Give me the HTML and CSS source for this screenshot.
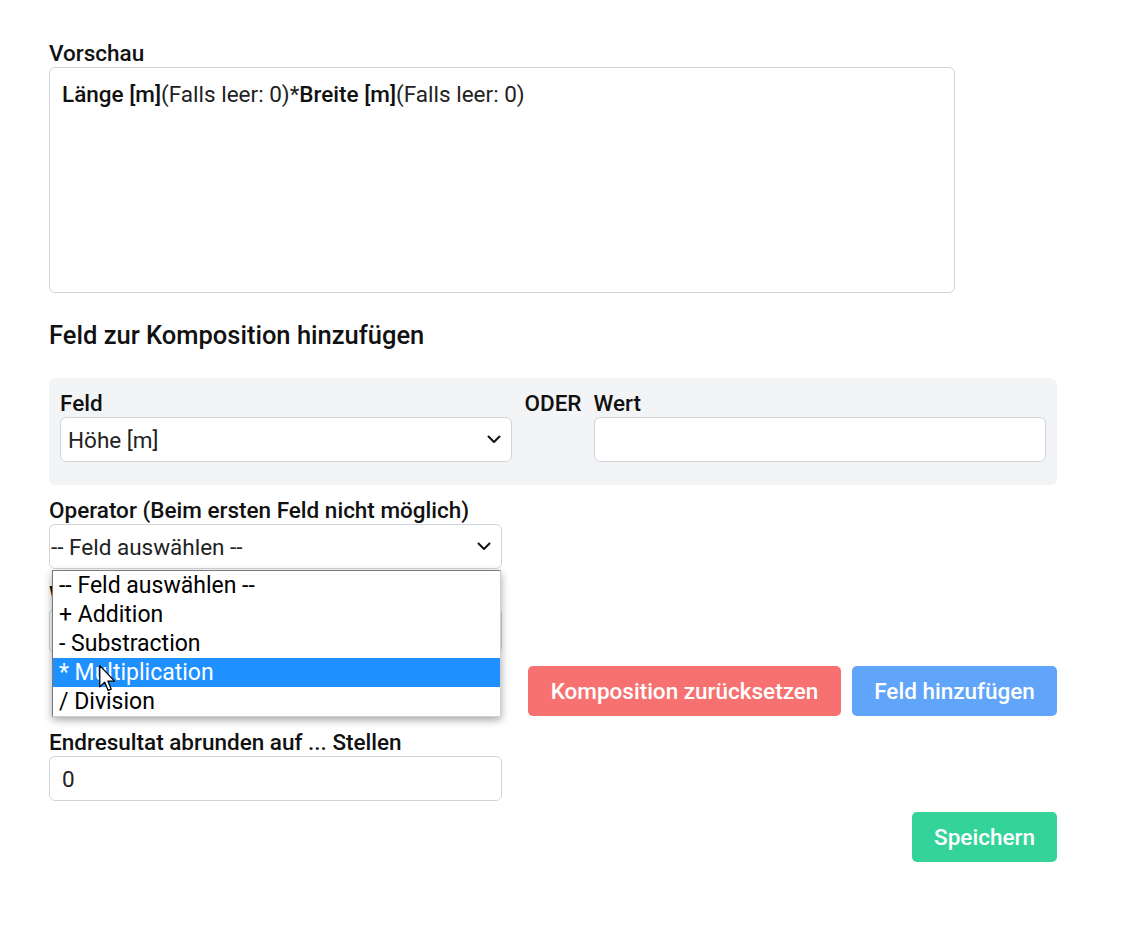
FILE: index.html
```html
<!DOCTYPE html>
<html lang="de">
<head>
<meta charset="utf-8">
<title>Komposition</title>
<link rel="stylesheet" href="styles.css">
</head>
<body>
<div class="page">
  <div class="label">Vorschau</div>
  <div class="preview"><b>Länge [m]</b>(Falls leer: 0)*<b>Breite [m]</b>(Falls leer: 0)</div>

  <h2 class="heading">Feld zur Komposition hinzufügen</h2>

  <div class="greybox">
    <div class="col">
      <div class="label">Feld</div>
      <div class="select sel-feld"><span>Höhe [m]</span>
        <svg class="chev" width="14" height="9" viewBox="0 0 14 9"><path d="M1.5 1.5 L7 7 L12.5 1.5" fill="none" stroke="#111" stroke-width="2" stroke-linecap="round" stroke-linejoin="round"/></svg>
      </div>
    </div>
    <div class="oder label">ODER</div>
    <div class="col">
      <div class="label">Wert</div>
      <div class="input"></div>
    </div>
  </div>

  <div class="field op-field">
    <div class="label">Operator (Beim ersten Feld nicht möglich)</div>
    <div class="select sel-op"><span>-- Feld auswählen --</span>
      <svg class="chev" width="14" height="9" viewBox="0 0 14 9"><path d="M1.5 1.5 L7 7 L12.5 1.5" fill="none" stroke="#111" stroke-width="2" stroke-linecap="round" stroke-linejoin="round"/></svg>
    </div>
    <div class="dropdown">
      <div class="opt">-- Feld auswählen --</div>
      <div class="opt">+ Addition</div>
      <div class="opt">- Substraction</div>
      <div class="opt active">* Multiplication</div>
      <div class="opt">/ Division</div>
      <svg class="cursor" width="17" height="27" viewBox="0 0 13 21"><path d="M0.5 0.5 L0.5 17 L4.3 13.3 L7 19.8 L9.4 18.8 L6.8 12.5 L12 12.5 Z" fill="#fff" stroke="#000" stroke-width="1" stroke-linejoin="round"/></svg>
    </div>
  </div>

  <div class="field half">
    <div class="label">Wert (Falls Feld leer)</div>
    <div class="input"></div>
  </div>

  <div class="btnrow">
    <button class="btn red">Komposition zurücksetzen</button>
    <button class="btn blue">Feld hinzufügen</button>
  </div>

  <div class="field half round">
    <div class="label">Endresultat abrunden auf ... Stellen</div>
    <div class="input val">0</div>
  </div>

  <div class="saverow">
    <button class="btn green">Speichern</button>
  </div>
</div>
</body>
</html>
```

FILE: styles.css
```css
* { box-sizing: border-box; }
html, body { margin: 0; padding: 0; background: #fff; }
body {
  font-family: Roboto, "Liberation Sans", Arial, sans-serif;
  font-size: 22.5px;
  color: #111;
}
.page {
  width: 1057px;
  padding: 40px 0 60px 49px;
}
.label {
  font-weight: 500;
  line-height: 27px;
  height: 27px;
  color: #111;
  white-space: nowrap;
}
.preview {
  width: 906px;
  height: 226px;
  border: 1px solid #d1d5db;
  border-radius: 6px;
  padding: 12px 12px;
  line-height: 28px;
  color: #222;
}
.preview b { font-weight: 500; color: #111; }
.heading {
  margin: 25px 0 26px;
  font-size: 25.5px;
  font-weight: 500;
  line-height: 34px;
}
.greybox {
  display: flex;
  gap: 12px;
  background: #f3f4f6;
  border-radius: 6px;
  padding: 12px 11px 23px;
}
.col { flex: 1; display: flex; flex-direction: column; }
.oder { flex: none; }
.select, .input {
  height: 45px;
  background: #fff;
  border: 1px solid #d1d5db;
  border-radius: 6px;
  display: flex;
  align-items: center;
  color: #222;
}
.select { justify-content: space-between; padding: 0 10px 0 7px; }
.sel-op { padding-left: 1px; }
.chev { flex: none; }
.field { position: relative; margin-top: 12px; width: 453px; }
.dropdown {
  position: absolute;
  left: 3px;
  top: 73px;
  width: 449px;
  background: #fff;
  border: 1px solid #7a7a7a;
  border-right-color: #cfcfcf;
  border-bottom-color: #cfcfcf;
  box-shadow: 0 3px 8px rgba(0,0,0,0.35);
  z-index: 10;
  padding: 0;
}
.opt {
  height: 29px;
  line-height: 29px;
  padding-left: 6px;
  color: #000;
  font-size: 23px;
}
.opt.active { background: #1e90ff; color: #fff; }
.cursor { position: absolute; left: 46px; top: 94px; }
.val { padding-left: 12px; }
.btnrow {
  display: flex;
  justify-content: flex-end;
  gap: 11px;
  margin-top: 13px;
}
.btn {
  font-family: inherit;
  font-size: 22.5px;
  font-weight: 500;
  color: #fff;
  border: none;
  border-radius: 5px;
  height: 50px;
  padding: 0 20px;
  cursor: pointer;
  white-space: nowrap;
}
.red { background: #f87171; width: 313px; }
.blue { background: #60a5fa; width: 205px; }
.green { background: #34d399; width: 145px; }
.round { margin-top: 13px; }
.saverow {
  display: flex;
  justify-content: flex-end;
  margin-top: 11px;
}
```
